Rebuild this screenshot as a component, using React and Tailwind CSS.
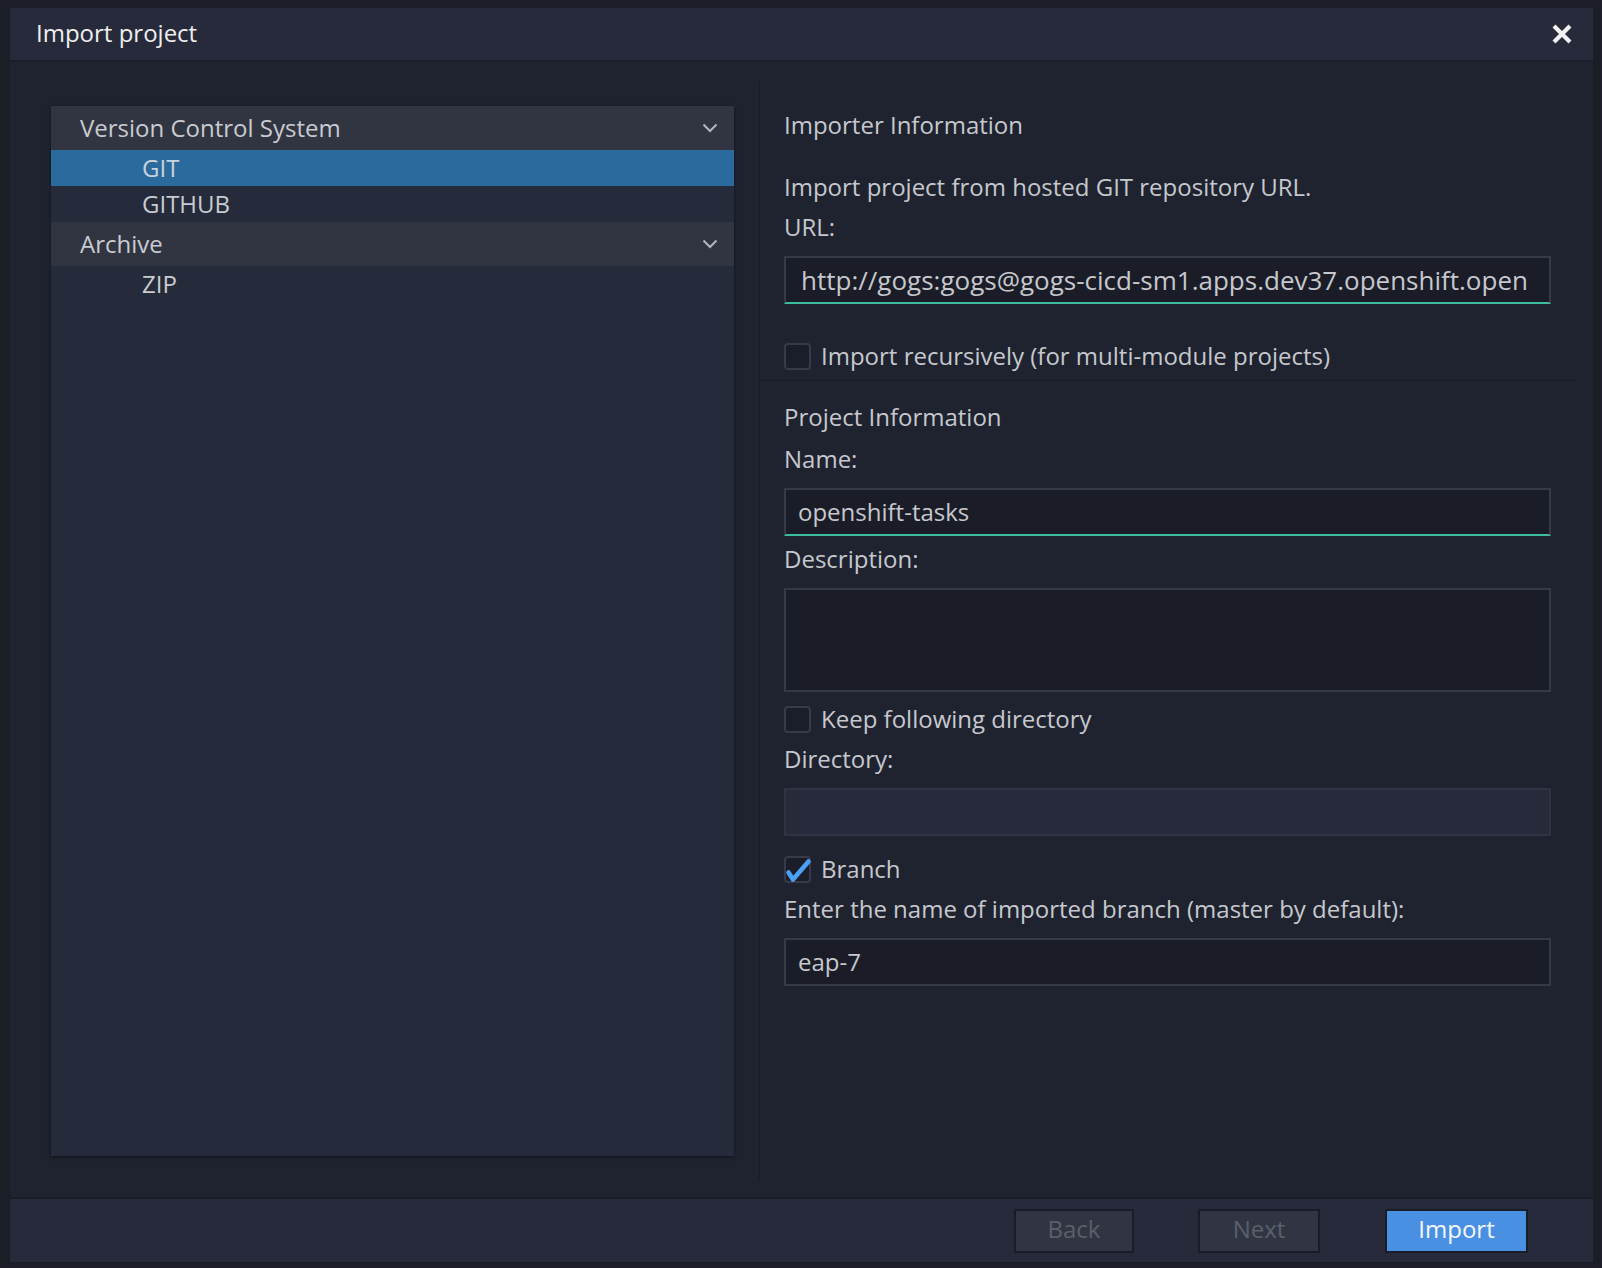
import React from 'react';

const font = { fontFamily: '"Open Sans", "Noto Sans", sans-serif' };

const Chevron = () => (
  <svg width="16" height="10" viewBox="0 0 16 10" fill="none">
    <polyline points="1.5,1.5 8,8 14.5,1.5" stroke="#b4b6bd" strokeWidth="2" />
  </svg>
);

const CloseIcon = () => (
  <svg width="22" height="22" viewBox="0 0 22 22">
    <path d="M3 3 L19 19 M19 3 L3 19" stroke="#f2f2f2" strokeWidth="4.2" />
  </svg>
);

const Check = () => (
  <svg width="28" height="28" viewBox="0 0 28 28" className="absolute -left-[2px] -top-[2px]">
    <path d="M4.5 16.5 L9 23.5 L24.5 5.5" stroke="#4aa0f4" strokeWidth="4.6" strokeLinecap="round" strokeLinejoin="round" fill="none" />
  </svg>
);

const CheckBox = ({ checked }) => (
  <div className="relative w-[27px] h-[27px] rounded-[4px] border-2 border-[#363b4a] bg-[#1b1e29] shrink-0">
    {checked && <Check />}
  </div>
);

const TreeGroup = ({ title, items, selected }) => (
  <div>
    <div className="h-[44px] flex items-center justify-between pl-[29px] pr-[16px] bg-[#313542] text-[24px] leading-[32px] text-[#c9cbd0]">
      <span>{title}</span>
      <Chevron />
    </div>
    {items.map((item) => (
      <div
        key={item}
        className={`h-[36px] flex items-center pl-[91px] text-[24px] leading-[32px] ${
          item === selected ? 'bg-[#2a6a9c] text-[#c8d3de]' : 'bg-[#262b3b] text-[#c9cbd0]'
        }`}
      >
        {item}
      </div>
    ))}
  </div>
);

const Label = ({ children, className = '' }) => (
  <div className={`text-[24px] leading-[32px] text-[#c6c8cd] ${className}`}>{children}</div>
);

const TextBox = ({ value, accent, disabled, className = '', pad = 'pl-[12px]', size = 'text-[24px]' }) => (
  <div
    className={`w-[767px] h-[48px] flex items-center overflow-hidden whitespace-nowrap border-2 ${
      disabled ? 'bg-[#262a3a] border-[#2f3442]' : 'bg-[#1a1d27] border-[#353a48]'
    } ${accent ? 'border-b-[#3cbd9c]' : ''} ${pad} ${size} text-[#c6c8cd] ${className}`}
  >
    {value}
  </div>
);

export default function App() {
  return (
    <div className="w-[1602px] h-[1268px] bg-[#1b1e27] overflow-hidden" style={font}>
      <div className="ml-[10px] pt-[8px] w-[1583px]">
        {/* Header */}
        <div className="h-[54px] bg-[#262a3a] border-b-2 border-[#1b1e28] flex items-center justify-between pl-[26px] pr-[20px]">
          <span className="text-[24px] leading-[32px] -mt-[2px] text-[#eeeeee]">Import project</span>
          <CloseIcon />
        </div>

        {/* Body */}
        <div className="h-[1135px] bg-[#1f2330] flex">
          <div className="w-[749px] pl-[41px] pt-[44px] shrink-0">
            <div className="w-[683px] h-[1050px] bg-[#262b3b] shadow-[0_1px_3px_rgba(0,0,0,0.5)]">
              <TreeGroup title="Version Control System" items={['GIT', 'GITHUB']} selected="GIT" />
              <TreeGroup title="Archive" items={['ZIP']} />
            </div>
          </div>

          <div className="w-[817px] mt-[20px] mb-[17px] border-l border-[#191c25]">
            {/* Importer Information */}
            <div className="pl-[24px] pr-[25px] pt-[27px] pb-[8px] border-b border-[#1a1d26]">
              <Label>Importer Information</Label>
              <Label className="mt-[30px] text-[#a9b6c8]">Import project from hosted GIT repository URL.</Label>
              <Label className="mt-[8px]">URL:</Label>
              <TextBox
                className="mt-[13px]"
                accent
                pad="pl-[15px]"
                size="text-[26px]"
                value="http://gogs:gogs@gogs-cicd-sm1.apps.dev37.openshift.open"
              />
              <div className="mt-[36px] flex items-center gap-[10px]">
                <CheckBox />
                <Label>Import recursively (for multi-module projects)</Label>
              </div>
            </div>

            {/* Project Information */}
            <div className="pl-[24px] pr-[25px] pt-[20px]">
              <Label>Project Information</Label>
              <Label className="mt-[10px]">Name:</Label>
              <TextBox className="mt-[13px]" accent value="openshift-tasks" />
              <Label className="mt-[7px]">Description:</Label>
              <div className="mt-[13px] w-[767px] h-[104px] bg-[#1a1d27] border-2 border-[#353a48]" />
              <div className="mt-[11px] flex items-center gap-[10px]">
                <CheckBox />
                <Label>Keep following directory</Label>
              </div>
              <Label className="mt-[8px]">Directory:</Label>
              <TextBox className="mt-[13px]" disabled value="" />
              <div className="mt-[17px] flex items-center gap-[10px]">
                <CheckBox checked />
                <Label>Branch</Label>
              </div>
              <Label className="mt-[8px]">Enter the name of imported branch (master by default):</Label>
              <TextBox className="mt-[13px]" value="eap-7" />
            </div>
          </div>
        </div>

        {/* Footer */}
        <div className="h-[65px] bg-[#262a3a] border-t-2 border-[#191c25] flex items-center justify-end pr-[65px]">
          <button className="w-[120px] h-[44px] pb-[4px] leading-[32px] bg-[#313543] border-2 border-[#1a1d27] text-[24px] text-[#5b5f6a]">
            Back
          </button>
          <button className="ml-[64px] w-[122px] h-[44px] pb-[4px] leading-[32px] bg-[#313543] border-2 border-[#1a1d27] text-[24px] text-[#5b5f6a]">
            Next
          </button>
          <button className="ml-[65px] w-[143px] h-[44px] pb-[4px] leading-[32px] bg-[#4a90e2] border-2 border-[#1a1d27] text-[24px] text-[#f4f7fb]">
            Import
          </button>
        </div>
      </div>
    </div>
  );
}
